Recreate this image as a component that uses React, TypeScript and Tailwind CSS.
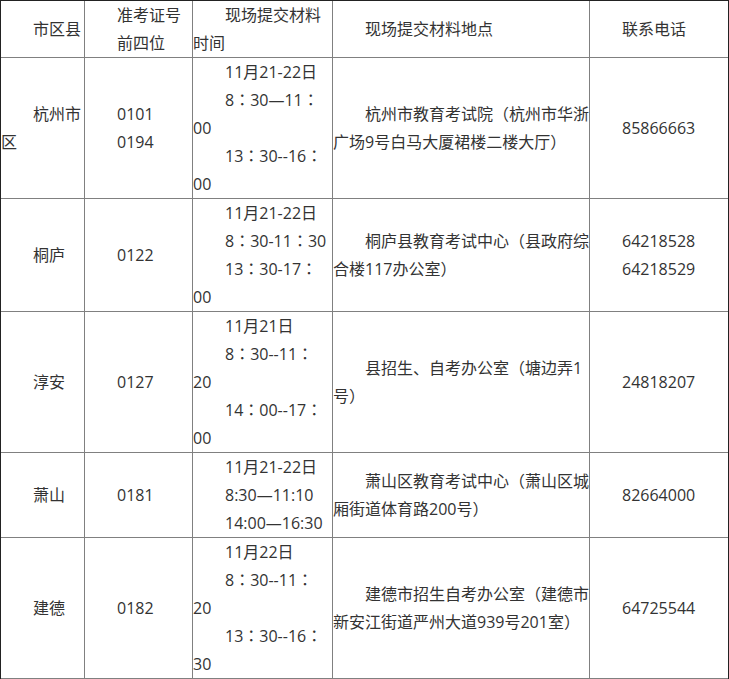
// "^" at the start of a line = wrapped continuation, no first-line indent
const rows: string[][][] = [
  [["市区县"], ["准考证号", "前四位"], ["现场提交材料", "^时间"], ["现场提交材料地点"], ["联系电话"]],
  [
    ["杭州市", "^区"],
    ["0101", "0194"],
    ["11月21-22日", "8：30—11：", "^00", "13：30--16：", "^00"],
    ["杭州市教育考试院（杭州市华浙", "^广场9号白马大厦裙楼二楼大厅）"],
    ["85866663"],
  ],
  [
    ["桐庐"],
    ["0122"],
    ["11月21-22日", "8：30-11：30", "13：30-17：", "^00"],
    ["桐庐县教育考试中心（县政府综", "^合楼117办公室）"],
    ["64218528", "64218529"],
  ],
  [
    ["淳安"],
    ["0127"],
    ["11月21日", "8：30--11：", "^20", "14：00--17：", "^00"],
    ["县招生、自考办公室（塘边弄1", "^号）"],
    ["24818207"],
  ],
  [
    ["萧山"],
    ["0181"],
    ["11月21-22日", "8:30—11:10", "14:00—16:30"],
    ["萧山区教育考试中心（萧山区城", "^厢街道体育路200号）"],
    ["82664000"],
  ],
  [
    ["建德"],
    ["0182"],
    ["11月22日", "8：30--11：", "^20", "13：30--16：", "^30"],
    ["建德市招生自考办公室（建德市", "^新安江街道严州大道939号201室）"],
    ["64725544"],
  ],
]

// full-width colon / brackets sit centred in the reference font
function Punct({ text }: { text: string }) {
  return (
    <>
      {text.split(/([：（）])/).map((part, i) =>
        /^[：（）]$/.test(part) ? (
          <span key={i} className="font-['Noto_Sans_CJK_TC',sans-serif] leading-none">
            {part}
          </span>
        ) : (
          part
        ),
      )}
    </>
  )
}

export default function App() {
  return (
    <div className="w-[729px] border-l border-t border-r border-[#222] bg-[#808080] font-['Open_Sans','Noto_Sans_CJK_SC',sans-serif] text-[16px] leading-[28px] text-[#333]">
      <div className="grid grid-cols-[83px_107px_139px_256px_138px] gap-px pb-px">
        {rows.map((row, i) =>
          row.map((cell, j) => (
            <div key={`${i}-${j}`} className="flex flex-col justify-center bg-white">
              {cell.map((line, k) =>
                line.startsWith("^") ? (
                  <p key={k} className="h-[28px] whitespace-nowrap">
                    <Punct text={line.slice(1)} />
                  </p>
                ) : (
                  <p key={k} className="h-[28px] indent-8 whitespace-nowrap">
                    <Punct text={line} />
                  </p>
                ),
              )}
            </div>
          )),
        )}
      </div>
    </div>
  )
}
